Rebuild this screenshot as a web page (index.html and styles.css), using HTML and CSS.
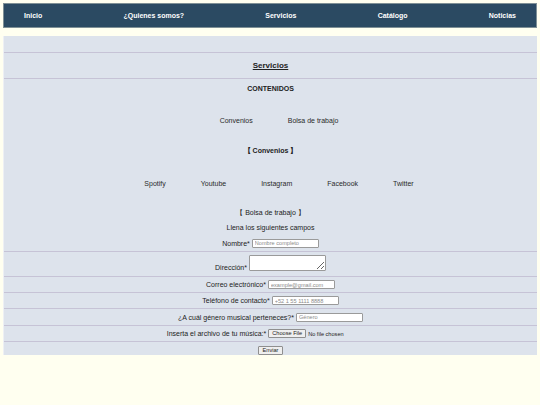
FILE: index.html
```html
<!DOCTYPE html>
<html lang="es">
<head>
<meta charset="utf-8">
<title>Servicios</title>
<link rel="stylesheet" href="styles.css">
</head>
<body>
<nav class="nav">
  <a href="#">Inicio</a>
  <a href="#">¿Quienes somos?</a>
  <a href="#">Servicios</a>
  <a href="#">Catálogo</a>
  <a href="#">Noticias</a>
</nav>
<main class="main">
  <div class="band"></div>
  <h2 class="title"><span>Servicios</span></h2>
  <div class="contenidos">CONTENIDOS</div>
  <ul class="links links-top">
    <li><a href="#">Convenios</a></li>
    <li><a href="#">Bolsa de trabajo</a></li>
  </ul>
  <div class="sub sub-bold">【 Convenios 】</div>
  <ul class="links links-social">
    <li><a href="#">Spotify</a></li>
    <li><a href="#">Youtube</a></li>
    <li><a href="#">Instagram</a></li>
    <li><a href="#">Facebook</a></li>
    <li><a href="#">Twitter</a></li>
  </ul>
  <div class="sub sub-bolsa">【 Bolsa de trabajo 】</div>
  <div class="sub sub-llena">Llena los siguientes campos</div>
  <form class="form">
    <div class="row row-nombre"><label>Nombre*</label><input class="field" type="text" placeholder="Nombre completo"></div>
    <div class="row row-dir"><label>Dirección*</label><textarea class="area"></textarea></div>
    <div class="row row-correo"><label>Correo electrónico*</label><input class="field" type="email" placeholder="example@gmail.com"></div>
    <div class="row row-tel"><label>Teléfono de contacto*</label><input class="field" type="tel" placeholder="+52 1 55 1111 8888"></div>
    <div class="row row-gen"><label>¿A cuál género musical perteneces?*</label><input class="field" type="text" placeholder="Género"></div>
    <div class="row row-file"><label>Inserta el archivo de tu música:*</label><span class="filebox"><span class="filebtn">Choose File</span><span class="filetxt">No file chosen</span></span></div>
    <div class="row row-send"><button class="send" type="button">Enviar</button></div>
  </form>
</main>
</body>
</html>
```
FILE: styles.css
```css
* { box-sizing: border-box; }

body {
  margin: 3px;
  background: #fffff0;
  font-family: "Liberation Sans", Arial, sans-serif;
  font-size: 7px;
  color: #222;
}

a { color: inherit; text-decoration: none; }

.nav {
  display: flex;
  justify-content: space-between;
  align-items: center;
  height: 25px;
  padding: 0 20px 0 20px;
  background: #2b4a62;
  border: 1px solid #7f9095;
  color: #fff;
  font-weight: bold;
}

.main {
  margin-top: 8px;
  background: #dde3ec;
  border-left: 1px solid #eef0f4;
}

.band {
  height: 17px;
  border-bottom: 1px solid #c6c3d6;
}

.title {
  margin: 0;
  height: 26px;
  display: flex;
  align-items: center;
  justify-content: center;
  font-size: 8px;
  font-weight: bold;
  border-bottom: 1px solid #c6c3d6;
}
.title span { text-decoration: underline; }

.contenidos {
  height: 20px;
  line-height: 20px;
  text-align: center;
  font-weight: bold;
}

.links {
  margin: 0;
  padding: 0 0 0 17px;
  list-style: none;
  display: flex;
  justify-content: center;
  align-items: center;
  gap: 35px;
  color: #2a2a2a;
}
.links-top { height: 42px; }
.links-social { height: 44px; }

.sub { text-align: center; }
.sub-bold { height: 20px; line-height: 20px; font-weight: bold; }
.sub-bolsa { height: 16px; line-height: 16px; }
.sub-llena { height: 14px; line-height: 14px; }

.form { margin: 0; }

.row {
  display: flex;
  justify-content: center;
  align-items: center;
  gap: 2px;
  border-bottom: 1px solid #c6c3d6;
}
.row-nombre { height: 17px; }
.row-dir { height: 25px; align-items: flex-end; padding-bottom: 5px; }
.row-dir label { line-height: 7px; }
.row-correo { height: 16px; }
.row-tel { height: 16px; }
.row-gen { height: 17px; }
.row-file { height: 16px; }
.row-send { height: 13px; border-bottom: none; align-items: flex-start; padding-top: 4px; }

.field {
  width: 67px;
  height: 9px;
  padding: 0 2px;
  border: 1px solid #9a9a9a;
  border-radius: 1px;
  background: #fff;
  font-family: "Liberation Sans", Arial, sans-serif;
  font-size: 5.6px;
  color: #222;
}
.field::placeholder { color: #8a8a8a; }

.area {
  width: 77px;
  height: 16px;
  border: 1px solid #9a9a9a;
  border-radius: 1px;
  background: #fff;
  resize: vertical;
  font-size: 5.6px;
  padding: 1px;
}

.filebox {
  width: 106px;
  display: inline-flex;
  align-items: center;
  gap: 2px;
  font-size: 5.6px;
}
.filebtn {
  display: inline-block;
  height: 9px;
  line-height: 7px;
  padding: 0 3px;
  border: 1px solid #8f8f8f;
  border-radius: 1px;
  background: #efefef;
}

.send {
  height: 9px;
  padding: 0 4px;
  border: 1px solid #8f8f8f;
  border-radius: 1px;
  background: #efefef;
  font-family: "Liberation Sans", Arial, sans-serif;
  font-size: 5.6px;
  line-height: 7px;
  color: #222;
}
```
